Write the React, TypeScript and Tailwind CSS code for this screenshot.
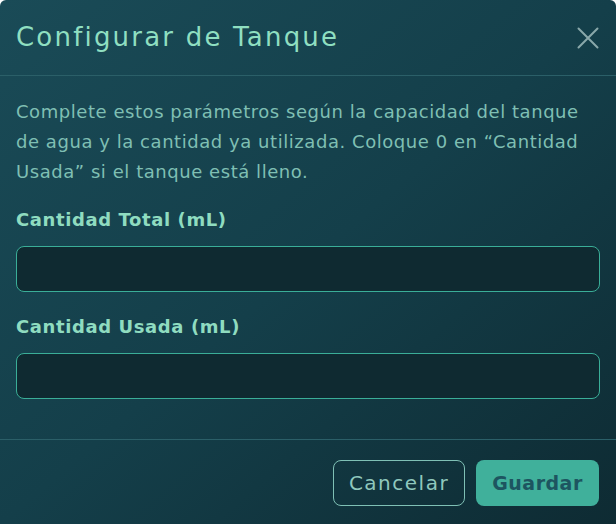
export default function App() {
  return (
    <div className="w-[616px] h-[524px] overflow-hidden rounded-t-md bg-gradient-to-br from-[#1a4b57] via-[#143f4a] to-[#0e2b33] font-['DejaVu_Sans',sans-serif]">
      {/* header */}
      <div className="flex h-[76px] items-center justify-between border-b border-[#2b5f68] px-4">
        <h2 className="text-[26px] tracking-[2.2px] text-[#8fdfc1]">Configurar de Tanque</h2>
        <button className="mr-[1px] text-[#8aa8aa]">
          <svg width="22" height="22" viewBox="0 0 22 22" fill="none" stroke="currentColor" strokeWidth="2" strokeLinecap="round">
            <path d="M1.5 1.5L20.5 20.5M20.5 1.5L1.5 20.5" />
          </svg>
        </button>
      </div>

      {/* body */}
      <div className="flex flex-col px-4 pt-[21px] pb-[40px]">
        <p className="text-[18px] leading-[30px] tracking-[0.55px] text-[#7fbfb3]">
          Complete estos parámetros según la capacidad del tanque de agua y la cantidad ya utilizada. Coloque 0 en “Cantidad Usada” si el tanque está lleno.
        </p>

        <label className="mt-[21px] text-[18px] leading-6 font-semibold tracking-[0.6px] text-[#8fdcc0]">Cantidad Total (mL)</label>
        <input className="mt-[14px] h-[46px] rounded-lg border border-[#3aae98] bg-[#0f2a31] px-3 text-[#cfeee5] outline-none" />

        <label className="mt-[23px] text-[18px] leading-6 font-semibold tracking-[0.6px] text-[#8fdcc0]">Cantidad Usada (mL)</label>
        <input className="mt-[14px] h-[46px] rounded-lg border border-[#3aae98] bg-[#0f2a31] px-3 text-[#cfeee5] outline-none" />
      </div>

      {/* footer */}
      <div className="flex justify-end gap-[11px] border-t border-[#2b5f68] px-[17px] pt-5">
        <button className="h-[46px] w-[132px] rounded-lg border border-[#7fc0b5] text-[20px] tracking-[1.5px] text-[#8fc8bd]">
          Cancelar
        </button>
        <button className="h-[46px] w-[123px] rounded-lg bg-[#40b09b] text-[19px] font-semibold tracking-[0.5px] text-[#1d5560]">
          Guardar
        </button>
      </div>
    </div>
  )
}
